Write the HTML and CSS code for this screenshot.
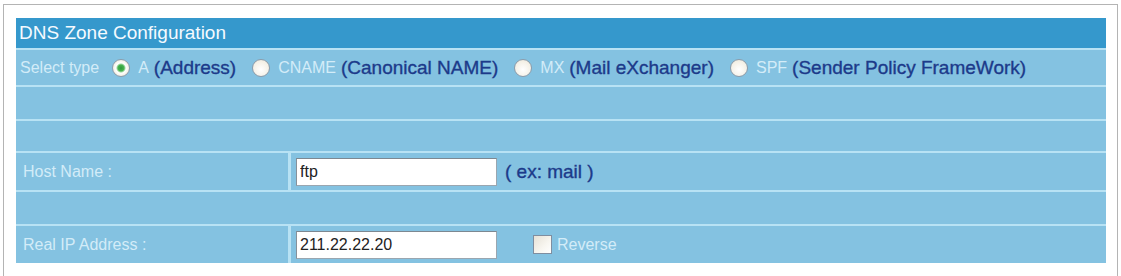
FILE: index.html
```html
<!DOCTYPE html>
<html>
<head>
<meta charset="utf-8">
<title>DNS Zone Configuration</title>
<link rel="stylesheet" href="styles.css">
</head>
<body>
<div class="frame">
  <div class="panel">
    <div class="row head">DNS Zone Configuration</div>
    <div class="row select">
      <span class="lt">Select type</span>
      <label class="opt first"><input class="radio" type="radio" name="t" checked><span class="lt code">A</span><span class="dk">(Address)</span></label>
      <label class="opt"><input class="radio" type="radio" name="t"><span class="lt code">CNAME</span><span class="dk">(Canonical NAME)</span></label>
      <label class="opt"><input class="radio" type="radio" name="t"><span class="lt code">MX</span><span class="dk">(Mail eXchanger)</span></label>
      <label class="opt"><input class="radio" type="radio" name="t"><span class="lt code">SPF</span><span class="dk">(Sender Policy FrameWork)</span></label>
    </div>
    <div class="row blank tall"></div>
    <div class="row blank"></div>
    <div class="row field">
      <div class="lbl lt">Host Name :</div>
      <div class="val"><input class="txt" type="text" value="ftp"><span class="dk hint">( ex: mail )</span></div>
    </div>
    <div class="row blank tall"></div>
    <div class="row field">
      <div class="lbl lt">Real IP Address :</div>
      <div class="val"><input class="txt" type="text" value="211.22.22.20"><label class="chk"><input class="box" type="checkbox"><span class="lt">Reverse</span></label></div>
    </div>
  </div>
</div>
</body>
</html>
```
FILE: styles.css
```css
html, body {
  margin: 0;
  padding: 0;
  background: #ffffff;
}
body {
  font-family: "Liberation Sans", Arial, sans-serif;
}
.frame {
  margin: 4px 0 0 3px;
  width: 1090px;
  height: 251px;
  border: 1px solid #b4b4b4;
  padding: 13px 11px 11px 12px;
  background: #ffffff;
}
.panel {
  display: flex;
  flex-direction: column;
  gap: 2px;
  background: #b8e2f4;
}
.row {
  background: #84c2e1;
  display: flex;
  align-items: center;
}
.head {
  background: #3598cc;
  height: 30px;
  color: #f4faff;
  font-size: 19px;
  padding-left: 3px;
}
.select {
  height: 35px;
  padding-left: 4px;
}
.blank {
  height: 30px;
}
.blank.tall {
  height: 32px;
}
.lt {
  color: #d3ecf8;
  font-size: 16px;
}
.dk {
  color: #1c3a8a;
  font-size: 19px;
  -webkit-text-stroke: 0.35px #1c3a8a;
}
.opt {
  display: flex;
  align-items: center;
  margin-left: 16px;
}
.opt.first {
  margin-left: 13px;
}
.code {
  margin-right: 5px;
}
.radio {
  -webkit-appearance: none;
  appearance: none;
  width: 18px;
  height: 18px;
  margin: 0 8px 0 0;
  border-radius: 50%;
  border: 1px solid #8d9caa;
  background: radial-gradient(circle at 50% 60%, #ffffff 0%, #f3efe4 70%, #d8d4c8 100%);
  box-sizing: border-box;
}
.radio:checked {
  background: radial-gradient(circle, #2f9a3a 0, #47b34f 3px, #9fd6a0 4px, #ffffff 5px, #f3efe4 70%, #d8d4c8 100%);
}
.field {
  display: grid;
  grid-template-columns: 272px 1fr;
  column-gap: 3px;
  background: transparent;
  height: 37px;
}
.lbl, .val {
  background: #84c2e1;
  height: 37px;
  display: flex;
  align-items: center;
}
.lbl {
  padding-left: 7px;
}
.val {
  padding-left: 5px;
}
.txt {
  width: 201px;
  height: 28px;
  box-sizing: border-box;
  margin: 0;
  padding: 0 3px;
  border: 1px solid #9aa6b0;
  border-top-color: #7d8891;
  border-left-color: #86919a;
  background: #ffffff;
  color: #222222;
  font-family: "Liberation Sans", Arial, sans-serif;
  font-size: 16px;
}
.hint {
  margin-left: 8px;
}
.chk {
  display: flex;
  align-items: center;
  margin-left: 36px;
}
.box {
  -webkit-appearance: none;
  appearance: none;
  width: 19px;
  height: 19px;
  margin: 0 5px 0 0;
  box-sizing: border-box;
  border: 1px solid #7f8ea0;
  background: linear-gradient(135deg, #e6e1d6 0%, #f8f6f0 60%, #ffffff 100%);
}
```
